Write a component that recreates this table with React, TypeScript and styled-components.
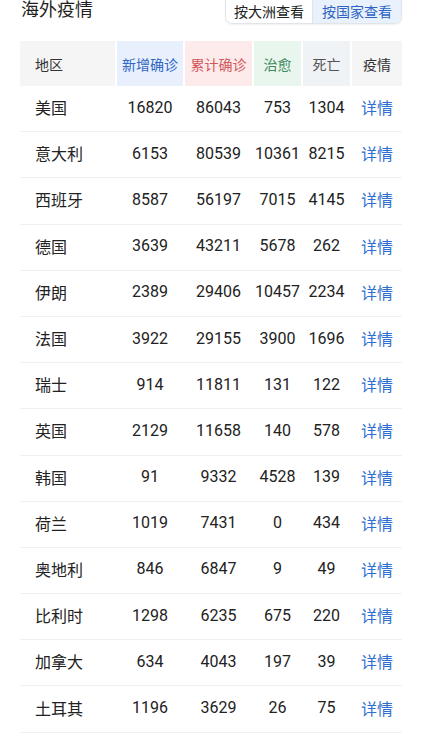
import React from "react";
import styled, { createGlobalStyle } from "styled-components";

const Global = createGlobalStyle`
  html, body { margin: 0; padding: 0; background: #ffffff; }
  body { font-family: Roboto, "Noto Sans CJK SC", sans-serif; color: #222; }
  * { box-sizing: border-box; }
`;

const Page = styled.div`
  width: 424px;
  padding: 0 22px 0 20px;
`;

const TopBar = styled.div`
  display: flex;
  justify-content: space-between;
  align-items: flex-start;
  height: 24px;
`;

const Title = styled.h2`
  margin: 0 0 0 1px;
  font-size: 18px;
  font-weight: 400;
  line-height: 20px;
  color: #1f1f1f;
`;

const Toggle = styled.div`
  display: flex;
  height: 24px;
  border: 1px solid #e1e5ea;
  border-top: none;
  border-radius: 0 0 7px 7px;
  overflow: hidden;
  box-shadow: 0 1px 2px rgba(0, 0, 0, 0.06);
`;

const ToggleBtn = styled.div<{ $active?: boolean }>`
  display: flex;
  align-items: center;
  justify-content: center;
  white-space: nowrap;
  padding: 0 ${(p) => (p.$active ? "9px" : "8px")};
  font-size: 14px;
  line-height: 1;
  background: ${(p) => (p.$active ? "#e9f1fd" : "#ffffff")};
  color: ${(p) => (p.$active ? "#2d63c4" : "#222")};
  border-left: ${(p) => (p.$active ? "1px solid #dde4ee" : "none")};
`;

const COLS = "95px 66px 67px 47px 47px 50px";

const Table = styled.div`
  margin-top: 17px;
  width: 382px;
`;

const HeadRow = styled.div`
  display: grid;
  grid-template-columns: ${COLS};
  column-gap: 2px;
  height: 45px;
`;

type Tone = "plain" | "blue" | "red" | "green" | "slate";

const toneBg: Record<Tone, string> = {
  plain: "#f5f5f6",
  blue: "#e8f0fd",
  red: "#fdeaea",
  green: "#e9f6ee",
  slate: "#f0f3f6",
};
const toneFg: Record<Tone, string> = {
  plain: "#333",
  blue: "#2f66c6",
  red: "#d4575b",
  green: "#3f8a60",
  slate: "#555",
};

const HeadCell = styled.div<{ $tone: Tone; $left?: boolean }>`
  display: flex;
  align-items: center;
  justify-content: ${(p) => (p.$left ? "flex-start" : "center")};
  padding-left: ${(p) => (p.$left ? "15px" : "0")};
  background: ${(p) => toneBg[p.$tone]};
  color: ${(p) => toneFg[p.$tone]};
  font-size: 14px;
`;

const Row = styled.div`
  display: grid;
  grid-template-columns: ${COLS};
  column-gap: 2px;
  height: 46.2px;
  border-bottom: 1px solid #f0f0f0;
  align-items: center;
  padding-bottom: 3px;
`;

const Cell = styled.div<{ $left?: boolean; $link?: boolean }>`
  font-size: 16px;
  text-align: ${(p) => (p.$left ? "left" : "center")};
  padding-left: ${(p) => (p.$left ? "15px" : "0")};
  color: ${(p) => (p.$link ? "#2f6fd2" : "#222")};
  white-space: nowrap;
`;

const data: [string, number, number, number, number][] = [
  ["美国", 16820, 86043, 753, 1304],
  ["意大利", 6153, 80539, 10361, 8215],
  ["西班牙", 8587, 56197, 7015, 4145],
  ["德国", 3639, 43211, 5678, 262],
  ["伊朗", 2389, 29406, 10457, 2234],
  ["法国", 3922, 29155, 3900, 1696],
  ["瑞士", 914, 11811, 131, 122],
  ["英国", 2129, 11658, 140, 578],
  ["韩国", 91, 9332, 4528, 139],
  ["荷兰", 1019, 7431, 0, 434],
  ["奥地利", 846, 6847, 9, 49],
  ["比利时", 1298, 6235, 675, 220],
  ["加拿大", 634, 4043, 197, 39],
  ["土耳其", 1196, 3629, 26, 75],
];

export default function App() {
  return (
    <Page>
      <Global />
      <TopBar>
        <Title>海外疫情</Title>
        <Toggle>
          <ToggleBtn>按大洲查看</ToggleBtn>
          <ToggleBtn $active>按国家查看</ToggleBtn>
        </Toggle>
      </TopBar>
      <Table>
        <HeadRow>
          <HeadCell $tone="plain" $left>地区</HeadCell>
          <HeadCell $tone="blue">新增确诊</HeadCell>
          <HeadCell $tone="red">累计确诊</HeadCell>
          <HeadCell $tone="green">治愈</HeadCell>
          <HeadCell $tone="slate">死亡</HeadCell>
          <HeadCell $tone="plain">疫情</HeadCell>
        </HeadRow>
        {data.map(([name, a, b, c, d]) => (
          <Row key={name}>
            <Cell $left>{name}</Cell>
            <Cell>{a}</Cell>
            <Cell>{b}</Cell>
            <Cell>{c}</Cell>
            <Cell>{d}</Cell>
            <Cell $link>详情</Cell>
          </Row>
        ))}
      </Table>
    </Page>
  );
}
